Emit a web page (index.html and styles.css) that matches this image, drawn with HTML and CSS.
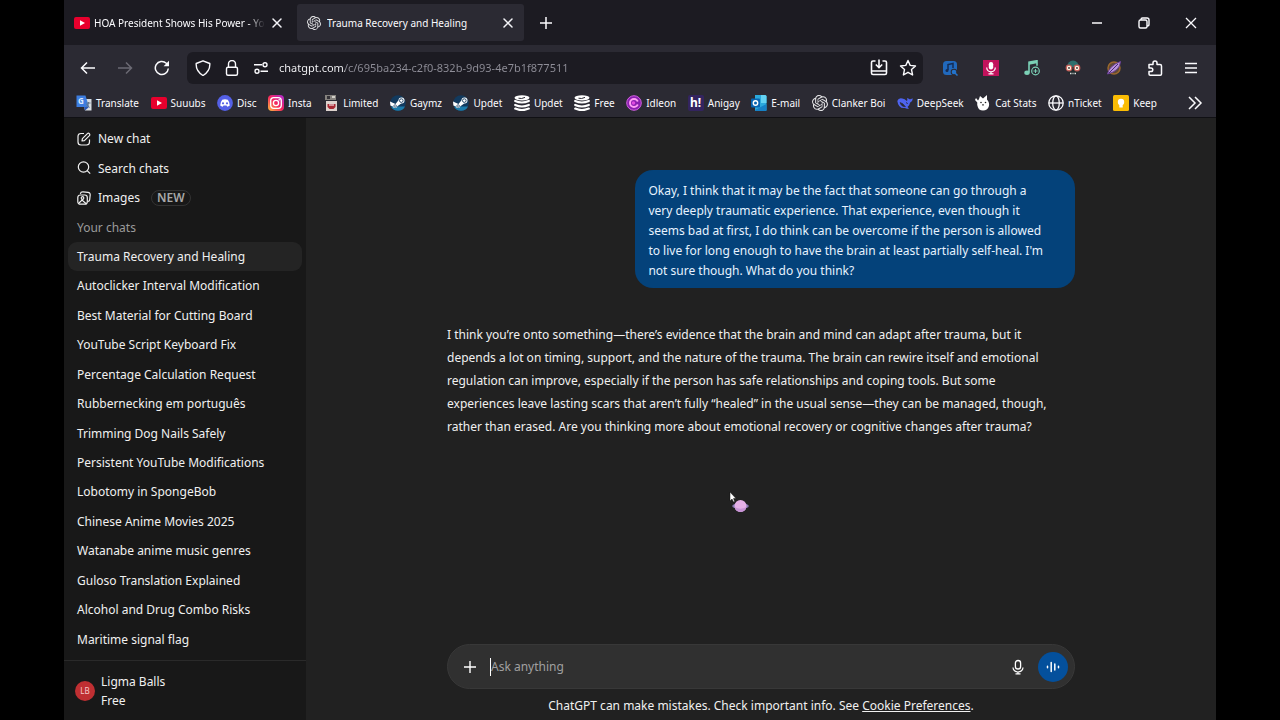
FILE: index.html
```
<!DOCTYPE html>
<html lang="en">
<head>
    <meta charset="UTF-8">
    <meta name="viewport" content="width=device-width, initial-scale=1.0">
    <title>Trauma Recovery and Healing</title>
    <link rel="stylesheet" href="styles.css">
</head>
<body>
    <!-- Icons used more than once -->
    <svg class="sprite" aria-hidden="true">
        <symbol id="youtube" viewBox="0 0 16 16"><rect y="2" width="16" height="12" rx="2" fill="#e8002d"/><path d="M6 5.2 11 8l-5 2.8z" fill="#fff"/></symbol>
        <symbol id="openai" viewBox="0 0 24 24"><path fill="#e4e4e6" d="M22.2819 9.8211a5.9847 5.9847 0 0 0-.5157-4.9108 6.0462 6.0462 0 0 0-6.5098-2.9A6.0651 6.0651 0 0 0 4.9807 4.1818a5.9847 5.9847 0 0 0-3.9977 2.9 6.0462 6.0462 0 0 0 .7427 7.0966 5.98 5.98 0 0 0 .511 4.9107 6.051 6.051 0 0 0 6.5146 2.9001A5.9847 5.9847 0 0 0 13.2599 24a6.0557 6.0557 0 0 0 5.7718-4.2058 5.9894 5.9894 0 0 0 3.9977-2.9001 6.0557 6.0557 0 0 0-.7475-7.073zm-9.022 12.6081a4.4755 4.4755 0 0 1-2.8764-1.0408l.1419-.0804 4.7783-2.7582a.7948.7948 0 0 0 .3927-.6813v-6.7369l2.02 1.1686a.071.071 0 0 1 .038.052v5.5826a4.504 4.504 0 0 1-4.4945 4.4944zm-9.6607-4.1254a4.4708 4.4708 0 0 1-.5346-3.0137l.142.0852 4.783 2.7582a.7712.7712 0 0 0 .7806 0l5.8428-3.3685v2.3324a.0804.0804 0 0 1-.0332.0615L9.74 19.9502a4.4992 4.4992 0 0 1-6.1408-1.6464zM2.3408 7.8956a4.485 4.485 0 0 1 2.3655-1.9728V11.6a.7664.7664 0 0 0 .3879.6765l5.8144 3.3543-2.0201 1.1685a.0757.0757 0 0 1-.071 0l-4.8303-2.7865A4.504 4.504 0 0 1 2.3408 7.872zm16.5963 3.8558L13.1038 8.364 15.1192 7.2a.0757.0757 0 0 1 .071 0l4.8303 2.7913a4.4944 4.4944 0 0 1-.6765 8.1042v-5.6772a.79.79 0 0 0-.407-.667zm2.0107-3.0231l-.142-.0852-4.7735-2.7818a.7759.7759 0 0 0-.7854 0L9.409 9.2297V6.8974a.0662.0662 0 0 1 .0284-.0615l4.8303-2.7866a4.4992 4.4992 0 0 1 6.6802 4.66zM8.3065 12.863l-2.02-1.1638a.0804.0804 0 0 1-.038-.0567V6.0742a4.4992 4.4992 0 0 1 7.3757-3.4537l-.142.0805L8.704 5.459a.7948.7948 0 0 0-.3927.6813zm1.0976-2.3654l2.602-1.4998 2.6069 1.4998v2.9994l-2.5974 1.4997-2.6067-1.4997Z"/></symbol>
        <symbol id="close" viewBox="0 0 16 16"><path d="m4 4 8 8m0-8-8 8" fill="none" stroke="#f4f4f8" stroke-width="1.5" stroke-linecap="round"/></symbol>
        <symbol id="steam" viewBox="0 0 16 16"><circle cx="8" cy="8" r="7.8" fill="#123a5e"/><path d="M1 11.5a7.8 7.8 0 0 0 14 0z" fill="#1c7bab"/><path d="m0 6.6 5.500 2.500 3-3.800a3 3 0 1 1 2.700 3.200L7.400 11.200A2.400 2.400 0 0 1 2.800 11.500L.4 10.400z" fill="#fff"/><circle cx="11.300" cy="5.600" r="1.800" fill="#fff" stroke="#123a5e" stroke-width=".9"/><circle cx="5.100" cy="11" r="1.300" fill="none" stroke="#123a5e" stroke-width=".7"/></symbol>
        <symbol id="stack" viewBox="0 0 16 16"><ellipse cx="8" cy="2.800" rx="7.500" ry="2.600" fill="#fff"/><path d="M4.500 3.200q3 1 6.500-.8" fill="none" stroke="#2b2a33"/><path d="M1.200 6q6.500 3 13.600 0M1.200 10q6.500 3 13.600 0M1.200 13.600q6.500 3 13.600 0" fill="none" stroke="#fff" stroke-width="2.200" stroke-linecap="round"/></symbol>
    </svg>

    <div class="window">
        <header class="browser">
            <div class="tabs">
                <div class="tab">
                    <svg class="icon"><use href="#youtube"/></svg>
                    <span class="tab-title faded">HOA President Shows His Power - You</span>
                    <button class="close" aria-label="Close tab"><svg class="icon"><use href="#close"/></svg></button>
                </div>
                <div class="tab active">
                    <svg class="icon small"><use href="#openai"/></svg>
                    <span class="tab-title">Trauma Recovery and Healing</span>
                    <button class="close" aria-label="Close tab"><svg class="icon"><use href="#close"/></svg></button>
                </div>
                <button class="new-tab" aria-label="New tab"><svg class="icon" viewBox="0 0 16 16"><path d="M8 2v12M2 8h12" stroke="#fbfbfe" stroke-width="1.500"/></svg></button>
                <div class="window-buttons">
                    <button aria-label="Minimize"><svg class="icon" viewBox="0 0 16 16"><path d="M3 8h10" stroke="#fbfbfe" stroke-width="1.500"/></svg></button>
                    <button aria-label="Restore"><svg class="icon" viewBox="0 0 16 16"><g fill="none" stroke="#fbfbfe" stroke-width="1.400"><rect x="3" y="5" width="8" height="8" rx="1.500"/><path d="M5 5V4.500Q5 3 6.500 3h4.500q2 0 2 2v4.500q0 1.500-2 1.500"/></g></svg></button>
                    <button aria-label="Close"><svg class="icon" viewBox="0 0 16 16"><path d="m3 3 10 10m0-10L3 13" stroke="#fbfbfe" stroke-width="1.300"/></svg></button>
                </div>
            </div>

            <div class="toolbar">
                <div class="nav-buttons">
                    <button aria-label="Back"><svg class="icon" viewBox="0 0 16 16"><path d="M15 8H1.500M7 2.500 1.500 8 7 13.500" fill="none" stroke="#fbfbfe" stroke-width="1.500"/></svg></button>
                    <button aria-label="Forward" disabled><svg class="icon" viewBox="0 0 16 16"><path d="M1 8h13.500M9 2.500 14.500 8 9 13.500" fill="none" stroke="#6b6a74" stroke-width="1.500"/></svg></button>
                    <button aria-label="Reload"><svg class="icon" viewBox="0 0 16 16"><path d="M14.300 8.500a6.500 6.500 0 1 1-2-5.200L14 5" fill="none" stroke="#fbfbfe" stroke-width="1.500"/><path d="M15 .8v5.400H9.600z" fill="#fbfbfe"/></svg></button>
                </div>
                <div class="url-bar">
                    <svg class="icon" viewBox="0 0 16 16"><path d="M8 .8 14.800 3.500q.5 7.500-6.800 12Q.7 11 1.200 3.500z" fill="none" stroke="#fbfbfe" stroke-width="1.400" stroke-linejoin="round"/></svg>
                    <svg class="icon" viewBox="0 0 16 16"><rect x="2.500" y="7.300" width="11" height="8" rx="1.500" fill="none" stroke="#fbfbfe" stroke-width="1.400"/><path d="M4.500 7V4a3.500 3.500 0 0 1 7 0v3" fill="none" stroke="#fbfbfe" stroke-width="1.400"/></svg>
                    <svg class="icon" viewBox="0 0 16 16"><g fill="none" stroke="#fbfbfe" stroke-width="1.400"><path d="M1 4.800h8M7.500 11.200H15"/><circle cx="12" cy="4.800" r="2"/><circle cx="4" cy="11.200" r="2"/></g></svg>
                    <input class="url" type="text" aria-label="Address" value="chatgpt.com/c/695ba234-c2f0-832b-9d93-4e7b1f877511">
                    <button class="wide" aria-label="Install"><svg class="icon large" viewBox="0 0 18 18"><path d="M5.500 2H3Q1.500 2 1.500 3.500v10.500Q1.500 15.500 3 15.500h12q1.500 0 1.500-1.500V3.500Q16.500 2 15 2h-2.500M1.500 12h15M9 .5v8M5.800 5.500 9 8.700l3.200-3.200" fill="none" stroke="#fbfbfe" stroke-width="1.600"/></svg></button>
                    <button class="wide" aria-label="Bookmark this page"><svg class="icon large" viewBox="0 0 18 18"><path d="m9 1.500 2.200 4.900 5.300.6-4 3.600 1.100 5.400L9 13.300 4.400 16l1.100-5.400L1.500 7l5.300-.6z" fill="none" stroke="#fbfbfe" stroke-width="1.400" stroke-linejoin="round"/></svg></button>
                </div>
                <div class="extensions">
                    <button aria-label="Music finder"><svg class="icon" viewBox="0 0 16 16"><rect x="1" y="1" width="14" height="14" rx="3.500" fill="#2169bd"/><path d="M6 10V4.500l5-1V8" fill="none" stroke="#142c55" stroke-width="1.500"/><circle cx="5" cy="10.500" r="1.500" fill="#142c55"/><circle cx="12" cy="12" r="3.300" fill="#2b2a33"/><circle cx="12" cy="12" r="2.300" fill="#2473ca"/><path d="m13 13 2.500 2.500" stroke="#2473ca" stroke-width="1.500"/></svg></button>
                    <button aria-label="Recorder"><svg class="icon" viewBox="0 0 16 16"><path fill="#c2125c" d="M0 0h16v16H0z"/><rect x="5.800" y="2" width="4.400" height="7.500" rx="2.200" fill="#fff"/><path d="M3.700 7.500a4.300 4.300 0 0 0 8.600 0M8 12v2M5.500 13.800h5" fill="none" stroke="#fff" stroke-width="1.200"/></svg></button>
                    <button aria-label="Add music"><svg class="icon" viewBox="0 0 16 16"><path d="M5 12.500V2.200l8-1.500v5" fill="none" stroke="#7bd0b6" stroke-width="1.600"/><path d="M5 2.300 13 .7v2.500l-8 1.500z" fill="#7bd0b6"/><ellipse cx="3" cy="12.800" rx="2.700" ry="2.200" fill="#7bd0b6"/><circle cx="11.500" cy="11" r="3.800" fill="none" stroke="#7bd0b6" stroke-width="1.200"/><path d="M11.500 9v4m-2-2h4" stroke="#7bd0b6"/></svg></button>
                    <button aria-label="Disguise"><svg class="icon" viewBox="0 0 16 16"><path d="M2 7a6 6.500 0 0 1 12 0z" fill="#2d6f6d"/><path d="M3 8h10v5q-5 4-10 0z" fill="#202b2d"/><circle cx="4" cy="8" r="2.800" fill="#fff0df" stroke="#c35e59" stroke-width="1.200"/><circle cx="12" cy="8" r="2.800" fill="#fff0df" stroke="#c35e59" stroke-width="1.200"/><circle cx="4" cy="8" r=".9" fill="#333"/><circle cx="12" cy="8" r=".9" fill="#333"/><path d="M5 13.500h1.500m1 0h1m1 0H11" stroke="#e3e3e3" stroke-width="1.300"/></svg></button>
                    <button aria-label="Planet"><svg class="icon" viewBox="0 0 16 16"><circle cx="8" cy="8" r="6" fill="#5e4a35" stroke="#9c682d" stroke-width="1.500"/><path d="M1.500 14Q3 6 14.500 1.500 14 11 1.500 14z" fill="#b894d7" stroke="#6c409b"/><path d="m3 13 9-9" stroke="#4a287b"/></svg></button>
                    <button aria-label="Extensions"><svg class="icon" viewBox="0 0 16 16"><path d="M2 4.500h4V3a2 2 0 0 1 4 0v1.500h3q1.500 0 1.500 1.500v8q0 1.200-1.200 1.200H3.200Q2 15.200 2 14v-2.500h2a1.800 1.800 0 0 0 0-3.600H2z" fill="none" stroke="#fbfbfe" stroke-width="1.500" stroke-linejoin="round"/></svg></button>
                    <button aria-label="Menu"><svg class="icon" viewBox="0 0 16 16"><path d="M2 3.500h12M2 8h12M2 12.500h12" stroke="#fbfbfe" stroke-width="1.300"/></svg></button>
                </div>
            </div>

            <nav class="bookmarks">
                <div class="bookmark-list">
                    <a href="#"><svg class="icon" viewBox="0 0 16 16"><path d="M6 4h9.500v11.500H9z" fill="#d7dce2"/><path d="M.5.500h9l3.500 11.500H.5z" fill="#3d7de0"/><path d="M9 15.500 13 12H8z" fill="#2858b8"/><text x="2" y="9" font-size="8" font-weight="700" fill="#dcebff">G</text><path d="M10.500 8h4M12.500 7v1q-.5 3-2 4m0-3 3 3.500" stroke="#61758a" fill="none"/></svg>Translate</a>
                    <a href="#"><svg class="icon"><use href="#youtube"/></svg>Suuubs</a>
                    <a href="#"><svg class="icon" viewBox="0 0 16 16"><circle cx="8" cy="8" r="7.900" fill="#5460e6"/><path d="M5.200 4.700Q8 4 10.800 4.700q2 2.500 2 5.800-1.200 1-2.500 1.200l-.8-1.200h-3l-.8 1.200q-1.300-.2-2.500-1.200 0-3.300 2-5.800z" fill="#fff"/><circle cx="6" cy="8.300" r="1.100" fill="#5460e6"/><circle cx="10" cy="8.300" r="1.100" fill="#5460e6"/></svg>Disc</a>
                    <a href="#"><svg class="icon" viewBox="0 0 16 16"><defs><linearGradient id="insta" x1="0" y1="1" x2="1" y2="0"><stop stop-color="#ffc43d"/><stop offset=".5" stop-color="#f4235f"/><stop offset="1" stop-color="#a82bd7"/></linearGradient></defs><rect width="16" height="16" rx="4" fill="url(#insta)"/><g fill="none" stroke="#fff" stroke-width="1.300"><rect x="2.700" y="2.700" width="10.600" height="10.600" rx="3"/><circle cx="8" cy="8" r="2.600"/></g><circle cx="11.200" cy="4.800" r=".8" fill="#fff"/></svg>Insta</a>
                    <a href="#"><svg class="icon" viewBox="0 0 16 16"><path d="M2 0h11v5H2z" fill="#85827e"/><path d="M4 1h3v3H4z" fill="#343238"/><path d="M9 1h3v2H9z" fill="#d2cfc9"/><path d="M3 6h11v10H3z" fill="#ddd2cd"/><path d="M4.500 9h8v3l-2 2h-4l-2-2z" fill="#a72732"/><path d="M6 10h5" stroke="#fff"/></svg>Limited</a>
                    <a href="#"><svg class="icon"><use href="#steam"/></svg>Gaymz</a>
                    <a href="#"><svg class="icon"><use href="#steam"/></svg>Updet</a>
                    <a href="#"><svg class="icon"><use href="#stack"/></svg>Updet</a>
                    <a href="#"><svg class="icon"><use href="#stack"/></svg>Free</a>
                    <a href="#"><svg class="icon" viewBox="0 0 16 16"><circle cx="8" cy="8" r="7.300" fill="#8a1fb0" stroke="#cf60de"/><circle cx="8" cy="8" r="4" fill="none" stroke="#ff9df5" stroke-width="2"/><path d="M8.500 8 13 6v4z" fill="#8a1fb0"/><circle cx="7.500" cy="8" r="1.800" fill="#e04be0"/></svg>Idleon</a>
                    <a href="#"><svg class="icon" viewBox="0 0 16 16"><rect width="16" height="16" rx="2" fill="#33245f"/><text x="2" y="12" font-size="12" font-weight="700" fill="#fff">h!</text></svg>Anigay</a>
                    <a href="#"><svg class="icon" viewBox="0 0 16 16"><path d="M4 0h10q1.500 0 1.500 1.500V15q0 1-1 1H5q-1 0-1-1z" fill="#2ba9dc"/><path d="M10 0h4q1.500 0 1.500 1.500V8H10z" fill="#63d2f2"/><path d="m4 15 11.500-6v6q0 1-1 1H5z" fill="#1681c6"/><rect y="3.500" width="9" height="9" rx="1" fill="#0864b0"/><circle cx="4.500" cy="8" r="2.200" fill="none" stroke="#fff" stroke-width="1.400"/></svg>E-mail</a>
                    <a href="#"><svg class="icon"><use href="#openai"/></svg>Clanker Boi</a>
                    <a href="#"><svg class="icon" viewBox="0 0 16 16"><path d="M.3 6q1.200-3.500 5-2.500 2.500.2 4.500 2.500 1-.5.2-3 1.500.2 2.500 1.200 1.500.3 3-1 .6 3.300-2.500 4.500-.5 3.300-2.500 4.300l1.500 1.500q-2.500.8-4-.5Q1.500 14 .3 6z" fill="#4e64ef"/><path d="M3 7.500q3 .5 5.500 4.200-4 .3-5.500-4.200zm6 0q1.500.2 1.500 1.500" fill="#2b2a33" stroke="#2b2a33" stroke-width=".6"/></svg>DeepSeek</a>
                    <a href="#"><svg class="icon" viewBox="0 0 16 16"><path d="m4 4 1-3 3 2.500L12 0v4.500q3 3.500 1.800 7Q12.500 15.500 8 15.500T2.500 11Q2 9.500 2.300 7.500L0 5l1-2 2 2.500z" fill="#fff"/><circle cx="6" cy="7.500" r=".8" fill="#222"/><circle cx="10.500" cy="7.500" r=".8" fill="#222"/><path d="m7 9.500 1 .8 1-.8" fill="none" stroke="#222"/></svg>Cat Stats</a>
                    <a href="#"><svg class="icon" viewBox="0 0 16 16"><g fill="none" stroke="#fbfbfe" stroke-width="1.300"><circle cx="8" cy="8" r="7.200"/><ellipse cx="8" cy="8" rx="3.300" ry="7.200"/><path d="M1 8h14"/></g></svg>nTicket</a>
                    <a href="#"><svg class="icon" viewBox="0 0 16 16"><rect width="16" height="16" rx="1.500" fill="#fbbc04"/><circle cx="8" cy="7" r="3.200" fill="#fff"/><path d="M6.300 9h3.400v3.500H6.300z" fill="#fff"/></svg>Keep</a>
                </div>
                <button class="more" aria-label="More bookmarks"><svg class="icon" viewBox="0 0 16 16"><path d="m2 2 6 6-6 6m6-12 6 6-6 6" fill="none" stroke="#fbfbfe" stroke-width="1.500"/></svg></button>
            </nav>
        </header>

        <div class="page">
            <aside class="sidebar">
                <nav class="chats">
                    <a href="#" class="action"><svg class="icon small" viewBox="0 0 14 14"><path d="M7 1.500H4Q1 1.500 1 4.500V10q0 3 3 3h5.500q3 0 3-3V7.500M5 9l.4-2.400 5-5q1-.8 1.900.1t.1 1.900l-5 5z" fill="none" stroke="#f0f0f0" stroke-width="1.200" stroke-linejoin="round"/></svg>New chat</a>
                    <a href="#" class="action"><svg class="icon small" viewBox="0 0 14 14"><circle cx="6.500" cy="6" r="5.200" fill="none" stroke="#f0f0f0" stroke-width="1.200"/><path d="m10.200 9.700 3 3" stroke="#f0f0f0" stroke-width="1.200"/></svg>Search chats</a>
                    <a href="#" class="action"><svg class="icon small" viewBox="0 0 14 14"><g fill="none" stroke="#f0f0f0" stroke-width="1.200"><rect x=".8" y="4" width="9.500" height="9.200" rx="2.500"/><path d="M3.300 2.800Q3.800.8 6 .9l5 .5q2.300.3 2.200 2.500l-.5 4.700q-.2 1.500-1.500 2M2 12l3-3 4.500 4"/><circle cx="5.500" cy="7" r="1.300"/></g></svg>Images <span class="badge">NEW</span></a>
                    <h2>Your chats</h2>
                    <a href="#" class="current">Trauma Recovery and Healing</a>
                    <a href="#">Autoclicker Interval Modification</a>
                    <a href="#">Best Material for Cutting Board</a>
                    <a href="#">YouTube Script Keyboard Fix</a>
                    <a href="#">Percentage Calculation Request</a>
                    <a href="#">Rubbernecking em português</a>
                    <a href="#">Trimming Dog Nails Safely</a>
                    <a href="#">Persistent YouTube Modifications</a>
                    <a href="#">Lobotomy in SpongeBob</a>
                    <a href="#">Chinese Anime Movies 2025</a>
                    <a href="#">Watanabe anime music genres</a>
                    <a href="#">Guloso Translation Explained</a>
                    <a href="#">Alcohol and Drug Combo Risks</a>
                    <a href="#">Maritime signal flag</a>
                </nav>
                <button class="account">
                    <span class="avatar">LB</span>
                    <span class="account-name">Ligma Balls<br>Free</span>
                </button>
            </aside>

            <main class="main">
                <div class="thread">
                    <p class="question">Okay, I think that it may be the fact that someone can go through a very deeply traumatic experience. That experience, even though it seems bad at first, I do think can be overcome if the person is allowed to live for long enough to have the brain at least partially self-heal. I'm not sure though. What do you think?</p>
                    <p class="answer">I think you’re onto something—there’s evidence that the brain and mind can adapt after trauma, but it depends a lot on timing, support, and the nature of the trauma. The brain can rewire itself and emotional regulation can improve, especially if the person has safe relationships and coping tools. But some experiences leave lasting scars that aren’t fully “healed” in the usual sense—they can be managed, though, rather than erased. Are you thinking more about emotional recovery or cognitive changes after trauma?</p>
                </div>
                <form class="composer">
                    <button type="button" class="add" aria-label="Add files"><svg class="icon small" viewBox="0 0 14 14"><path d="M7 1v12M1 7h12" stroke="#fff" stroke-width="1.400"/></svg></button>
                    <span class="caret"></span>
                    <input class="prompt" type="text" placeholder="Ask anything" aria-label="Ask anything">
                    <button type="button" aria-label="Dictate"><svg class="icon" viewBox="0 0 16 16"><rect x="5.400" y="1.500" width="5.200" height="8.500" rx="2.600" fill="none" stroke="#fff" stroke-width="1.300"/><path d="M3 8.500a5 4.500 0 0 0 10 0M8 13v2M5.500 14.800h5" fill="none" stroke="#fff" stroke-width="1.200"/></svg></button>
                    <button type="button" class="voice" aria-label="Use voice mode"><svg class="icon" viewBox="0 0 16 16"><path d="M2.500 7.300v1.400M6.200 3.500v9m3.600-7.500v6M13.500 7.300v1.400" stroke="#fff" stroke-width="1.500" stroke-linecap="round"/></svg></button>
                </form>
                <p class="notice">ChatGPT can make mistakes. Check important info. See <a href="#">Cookie Preferences</a>.</p>
                <svg class="pointer" viewBox="0 0 20 22"><path d="M1 0v9l2-2 1.500 3 1.200-.6L4.500 6.500H7z" fill="#fff" stroke="#111" stroke-width=".5"/><ellipse cx="11.500" cy="14" rx="8.300" ry="3" fill="#8978b4"/><circle cx="11.500" cy="14" r="6" fill="#e5b0e7"/><path d="M5.500 15q6 3.500 12 0-1.500 5-6 5t-6-5z" fill="#c793d5"/></svg>
            </main>
        </div>
    </div>
</body>
</html>
```
FILE: styles.css
```
* {
    box-sizing: border-box;
}

body {
    margin: 0;
    padding: 0 5%;
    background-color: #000;
    color: #f0f0f0;
    font-family: "Noto Sans", "Open Sans", sans-serif;
    font-size: 12px;
}

button,
input {
    padding: 0;
    border: none;
    outline: none;
    background: none;
    color: inherit;
    font: inherit;
}

button {
    display: flex;
    align-items: center;
    justify-content: center;
    flex-shrink: 0;
}

a {
    color: inherit;
    text-decoration: none;
}

.sprite {
    display: none;
}

.icon {
    width: 16px;
    height: 16px;
    flex-shrink: 0;
}

.icon.large {
    width: 18px;
    height: 18px;
}

.icon.small {
    width: 14px;
    height: 14px;
}

.window {
    display: flex;
    flex-direction: column;
    min-height: 100vh;
}

/* Browser */
.browser {
    background-color: #2b2a33;
    color: #fbfbfe;
    border-bottom: 1px solid #101014;
    font-size: 10px;
}

.tabs {
    display: flex;
    align-items: center;
    gap: 6px;
    height: 45px;
    background-color: #1c1b22;
}

.tab {
    display: flex;
    align-items: center;
    gap: 6px;
    width: 227px;
    height: 37px;
    padding: 0 8px 0 10px;
    border-radius: 3px;
}

.tab:first-child {
    gap: 4px;
    padding-right: 6px;
}

.tab.active {
    background-color: #2b2a33;
}

.tab-title {
    flex: 1;
    min-width: 0;
    overflow: hidden;
    white-space: nowrap;
}

.tab-title.faded {
    mask-image: linear-gradient(90deg, #000 90%, transparent);
}

.new-tab {
    width: 32px;
    height: 32px;
}

.window-buttons {
    display: flex;
    margin: 0 2px 0 auto;
}

.window-buttons button {
    width: 47px;
    height: 45px;
}

.toolbar {
    display: flex;
    align-items: center;
    height: 45px;
    padding: 0 9px 0 5px;
}

.nav-buttons {
    display: flex;
    margin-right: 7px;
}

.nav-buttons button {
    width: 37px;
    height: 32px;
}

.url-bar {
    display: flex;
    align-items: center;
    gap: 13px;
    flex: 1;
    height: 32px;
    padding: 0 5px 0 8px;
    border-radius: 6px;
    background-color: #1c1b22;
}

.url {
    flex: 1;
    min-width: 0;
    margin-left: -3px;
    font-size: 11px;
    /* the host is brighter than the path */
    background: linear-gradient(90deg, #fbfbfe 66px, #8f8e98 66px);
    background-clip: text;
    -webkit-background-clip: text;
    -webkit-text-fill-color: transparent;
}

.wide {
    width: 20px;
    height: 28px;
}

.url-bar .wide + .wide {
    margin-left: -4px;
}

.extensions {
    display: flex;
    margin-left: 6px;
}

.extensions button {
    width: 41px;
    height: 32px;
}

.extensions button:last-child {
    width: 32px;
}

.bookmarks {
    display: flex;
    align-items: center;
    height: 27px;
    padding: 0 13px 2px 12px;
}

.bookmark-list {
    display: flex;
    justify-content: space-between;
    flex: 1;
    margin-right: 30px;
}

.bookmark-list a {
    display: flex;
    align-items: center;
    gap: 4px;
    white-space: nowrap;
}

/* Sidebar */
.page {
    display: flex;
    flex: 1;
}

.sidebar {
    display: flex;
    flex-direction: column;
    width: 242px;
    background-color: #181818;
}

.chats {
    display: flex;
    flex-direction: column;
    flex: 1;
    padding: 6px 4px;
}

.chats a,
.chats h2 {
    display: flex;
    align-items: center;
    flex: 1;
    margin: 0;
    padding: 0 9px;
    border-radius: 9px;
    white-space: nowrap;
}

.chats h2 {
    color: #9b9b9b;
    font-size: 12px;
    font-weight: 400;
}

.chats .action {
    gap: 7px;
}

.chats .current {
    background-color: #242424;
}

.badge {
    margin-left: 4px;
    padding: 0 5px;
    border: 1px solid #333;
    border-radius: 8px;
    color: #a8a8a8;
    font-weight: 600;
    line-height: 14px;
}

.account {
    justify-content: flex-start;
    gap: 6px;
    height: 60px;
    padding: 0 11px;
    border-top: 1px solid #2a2a2a;
    text-align: left;
    line-height: 19px;
}

.avatar {
    width: 20px;
    height: 20px;
    border-radius: 50%;
    background-color: #bf2f32;
    color: #f5c9c9;
    font-size: 8px;
    line-height: 20px;
    text-align: center;
}

/* Chat */
.main {
    position: relative;
    display: flex;
    flex-direction: column;
    align-items: center;
    flex: 1;
    padding: 52px 20px 4px;
    background-color: #212121;
}

.thread {
    display: flex;
    flex-direction: column;
    flex: 1;
    width: 100%;
    max-width: 628px;
}

.question {
    align-self: flex-end;
    width: 70%;
    margin: 0;
    padding: 11px 24px 7px 13px;
    border-radius: 18px;
    background-color: #04427a;
    color: #e6f2ff;
    line-height: 20px;
}

.answer {
    margin: 35px 0 0;
    padding-right: 12px;
    line-height: 23px;
}

.composer {
    display: flex;
    align-items: center;
    width: 100%;
    max-width: 628px;
    height: 45px;
    padding: 0 6px 0 8px;
    border: 1px solid #383838;
    border-radius: 23px;
    background-color: #303030;
}

.add {
    width: 28px;
    height: 28px;
}

.caret {
    width: 1px;
    height: 18px;
    margin-left: 6px;
    background-color: #fff;
}

.prompt {
    flex: 1;
    min-width: 0;
}

.prompt::placeholder {
    color: #a0a0a0;
    opacity: 1;
}

.voice {
    width: 30px;
    height: 30px;
    margin-left: 12px;
    border-radius: 50%;
    background-color: #04509c;
}

.notice {
    margin: 7px 0 0;
    line-height: 20px;
}

.notice a {
    text-decoration: underline;
}

/* Mouse pointer over the page */
.pointer {
    position: absolute;
    top: 374px;
    left: 423px;
    width: 20px;
    height: 22px;
}
```
